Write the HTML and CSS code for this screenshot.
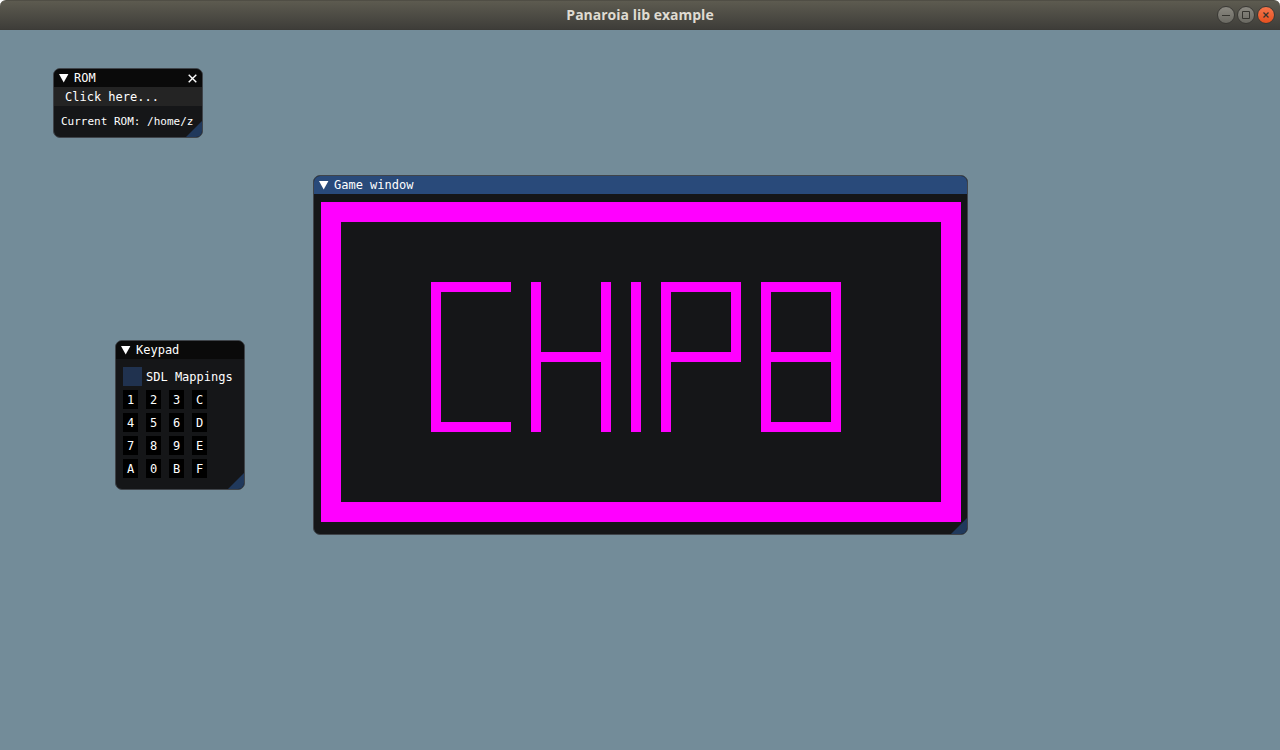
FILE: index.html
```html
<!DOCTYPE html>
<html lang="en">
<head>
<meta charset="utf-8">
<title>Panaroia lib example</title>
<link rel="stylesheet" href="styles.css">
</head>
<body>
<div class="app">
  <header class="titlebar">
    <h1 class="titlebar-text">Panaroia lib example</h1>
    <div class="titlebar-controls">
      <button class="control" type="button" aria-label="Minimize"><svg class="control-icon" viewBox="0 0 16 16"><path d="M4 8.5h8"/></svg></button>
      <button class="control" type="button" aria-label="Maximize"><svg class="control-icon" viewBox="0 0 16 16"><path d="M4.5 4.5h7v7h-7z"/></svg></button>
      <button class="control control-close" type="button" aria-label="Close"><svg class="control-icon" viewBox="0 0 16 16"><path d="M5.5 5.5l5 5M10.5 5.5l-5 5"/></svg></button>
    </div>
  </header>
  <main class="desktop">
    <section class="window window-rom">
      <div class="window-head">
        <button class="collapse" type="button" aria-label="Collapse ROM"><svg class="arrow" viewBox="0 0 10 9"><path d="M0 0h9.4L4.7 8.5z"/></svg></button>
        <h2 class="window-title">ROM</h2>
        <button class="window-close" type="button" aria-label="Close ROM"><svg class="cross" viewBox="0 0 9 9"><path d="M0.7 0.7l7.6 7.6M8.3 0.7L0.7 8.3"/></svg></button>
      </div>
      <div class="menubar"><button class="menu-item" type="button">Click here...</button></div>
      <p class="rom-path">Current ROM: /home/z</p>
      <span class="grip"></span>
    </section>

    <section class="window window-game">
      <div class="window-head window-head-active">
        <button class="collapse" type="button" aria-label="Collapse Game window"><svg class="arrow" viewBox="0 0 10 9"><path d="M0 0h9.4L4.7 8.5z"/></svg></button>
        <h2 class="window-title">Game window</h2>
      </div>
      <div class="window-body">
        <svg class="screen" viewBox="0 0 64 32" shape-rendering="crispEdges" role="img" aria-label="Game display">
          <rect x="0" y="0" width="64" height="2"/><rect x="0" y="30" width="64" height="2"/>
          <rect x="0" y="2" width="2" height="28"/><rect x="62" y="2" width="2" height="28"/>
          <rect x="11" y="8" width="8" height="1"/><rect x="11" y="9" width="1" height="13"/><rect x="11" y="22" width="8" height="1"/>
          <rect x="21" y="8" width="1" height="15"/><rect x="28" y="8" width="1" height="15"/><rect x="22" y="15" width="6" height="1"/>
          <rect x="31" y="8" width="1" height="15"/>
          <rect x="34" y="8" width="1" height="15"/><rect x="35" y="8" width="7" height="1"/><rect x="41" y="9" width="1" height="6"/><rect x="35" y="15" width="7" height="1"/>
          <rect x="44" y="8" width="1" height="15"/><rect x="51" y="8" width="1" height="15"/><rect x="45" y="8" width="6" height="1"/><rect x="45" y="15" width="6" height="1"/><rect x="45" y="22" width="6" height="1"/>
        </svg>
      </div>
      <span class="grip"></span>
    </section>

    <section class="window window-keypad">
      <div class="window-head">
        <button class="collapse" type="button" aria-label="Collapse Keypad"><svg class="arrow" viewBox="0 0 10 9"><path d="M0 0h9.4L4.7 8.5z"/></svg></button>
        <h2 class="window-title">Keypad</h2>
      </div>
      <div class="window-body">
        <div class="option"><input class="checkbox" id="sdl" type="checkbox"><label class="option-label" for="sdl">SDL Mappings</label></div>
        <div class="keys">
          <button class="key" type="button">1</button><button class="key" type="button">2</button><button class="key" type="button">3</button><button class="key" type="button">C</button>
          <button class="key" type="button">4</button><button class="key" type="button">5</button><button class="key" type="button">6</button><button class="key" type="button">D</button>
          <button class="key" type="button">7</button><button class="key" type="button">8</button><button class="key" type="button">9</button><button class="key" type="button">E</button>
          <button class="key" type="button">A</button><button class="key" type="button">0</button><button class="key" type="button">B</button><button class="key" type="button">F</button>
        </div>
      </div>
      <span class="grip"></span>
    </section>
  </main>
</div>
</body>
</html>
```
FILE: styles.css
```css
* { box-sizing: border-box; }
body { margin: 0; background: #fff; }
h1, h2, p { margin: 0; font-weight: normal; }
button { padding: 0; border: 0; background: none; color: inherit; font: inherit; }

.app {
  display: flex;
  flex-direction: column;
  min-height: 100vh;
  font: 12px/17px "DejaVu Sans Mono", "Liberation Mono", monospace;
  color: #fff;
}

.titlebar {
  display: grid;
  grid-template-columns: 1fr auto 1fr;
  align-items: center;
  height: 30px;
  padding: 0 5px;
  border-top: 1px solid #504e45;
  border-bottom: 1px solid #3c3b37;
  border-radius: 6px 6px 0 0;
  background: linear-gradient(#5d5b50, #3e3d39);
}
.titlebar-text {
  grid-column: 2;
  font: bold 14px/20px "Open Sans", "Noto Sans", sans-serif;
  color: #dfdbd2;
}
.titlebar-controls { display: flex; justify-content: flex-end; gap: 2px; }
.control {
  display: flex;
  align-items: center;
  justify-content: center;
  width: 18px;
  height: 18px;
  border: 1px solid #3a3935;
  border-radius: 50%;
  background: linear-gradient(#8a8880, #6a6962);
}
.control-close { background: linear-gradient(#f5754b, #e6501f); }
.control-icon { width: 16px; height: 16px; fill: none; stroke: #35342f; stroke-width: 1; }
.control-close .control-icon { stroke-width: 1.3; }

.desktop { position: relative; flex: 1; background: #738c99; }

.window {
  position: absolute;
  overflow: hidden;
  border: 1px solid #3f444a;
  border-radius: 7px;
  background: #151618;
}
.window-rom { left: 53px; top: 38px; width: 150px; height: 70px; }
.window-game { left: 313px; top: 145px; width: 655px; height: 360px; }
.window-keypad { left: 115px; top: 310px; width: 130px; height: 150px; }

.window-head {
  display: flex;
  align-items: center;
  gap: 5px;
  height: 18px;
  padding: 0 5px;
  background: #0a0a0a;
}
.window-head-active { background: #294a7a; }
.collapse, .window-close { display: flex; }
.window-close { margin-left: auto; }
.window-title { font-size: 12px; line-height: 18px; }
.arrow { width: 10px; height: 9px; fill: #fff; }
.cross { width: 9px; height: 9px; fill: none; stroke: #fff; stroke-width: 1.4; }
.window-body { padding: 8px 6px 8px 7px; }

.menubar { display: flex; height: 19px; padding: 2px 11px 0; background: #242424; }
.rom-path { margin-top: 7px; padding-left: 7px; font-size: 11px; white-space: nowrap; }

.screen { display: block; width: 100%; fill: #f0f; }

.option { display: flex; gap: 4px; white-space: nowrap; }
.option-label { padding-top: 2px; }
.checkbox { appearance: none; flex: none; width: 19px; height: 19px; margin: 0; background: #20324f; }
.keys { display: grid; grid-template-columns: repeat(4, 15px); gap: 4px 8px; margin-top: 4px; }
.key { height: 19px; padding-top: 2px; background: #000; text-align: center; }

.grip {
  position: absolute;
  right: 0;
  bottom: 0;
  width: 16px;
  height: 16px;
  background: #20395c;
  clip-path: polygon(100% 0, 100% 100%, 0 100%);
}
```
